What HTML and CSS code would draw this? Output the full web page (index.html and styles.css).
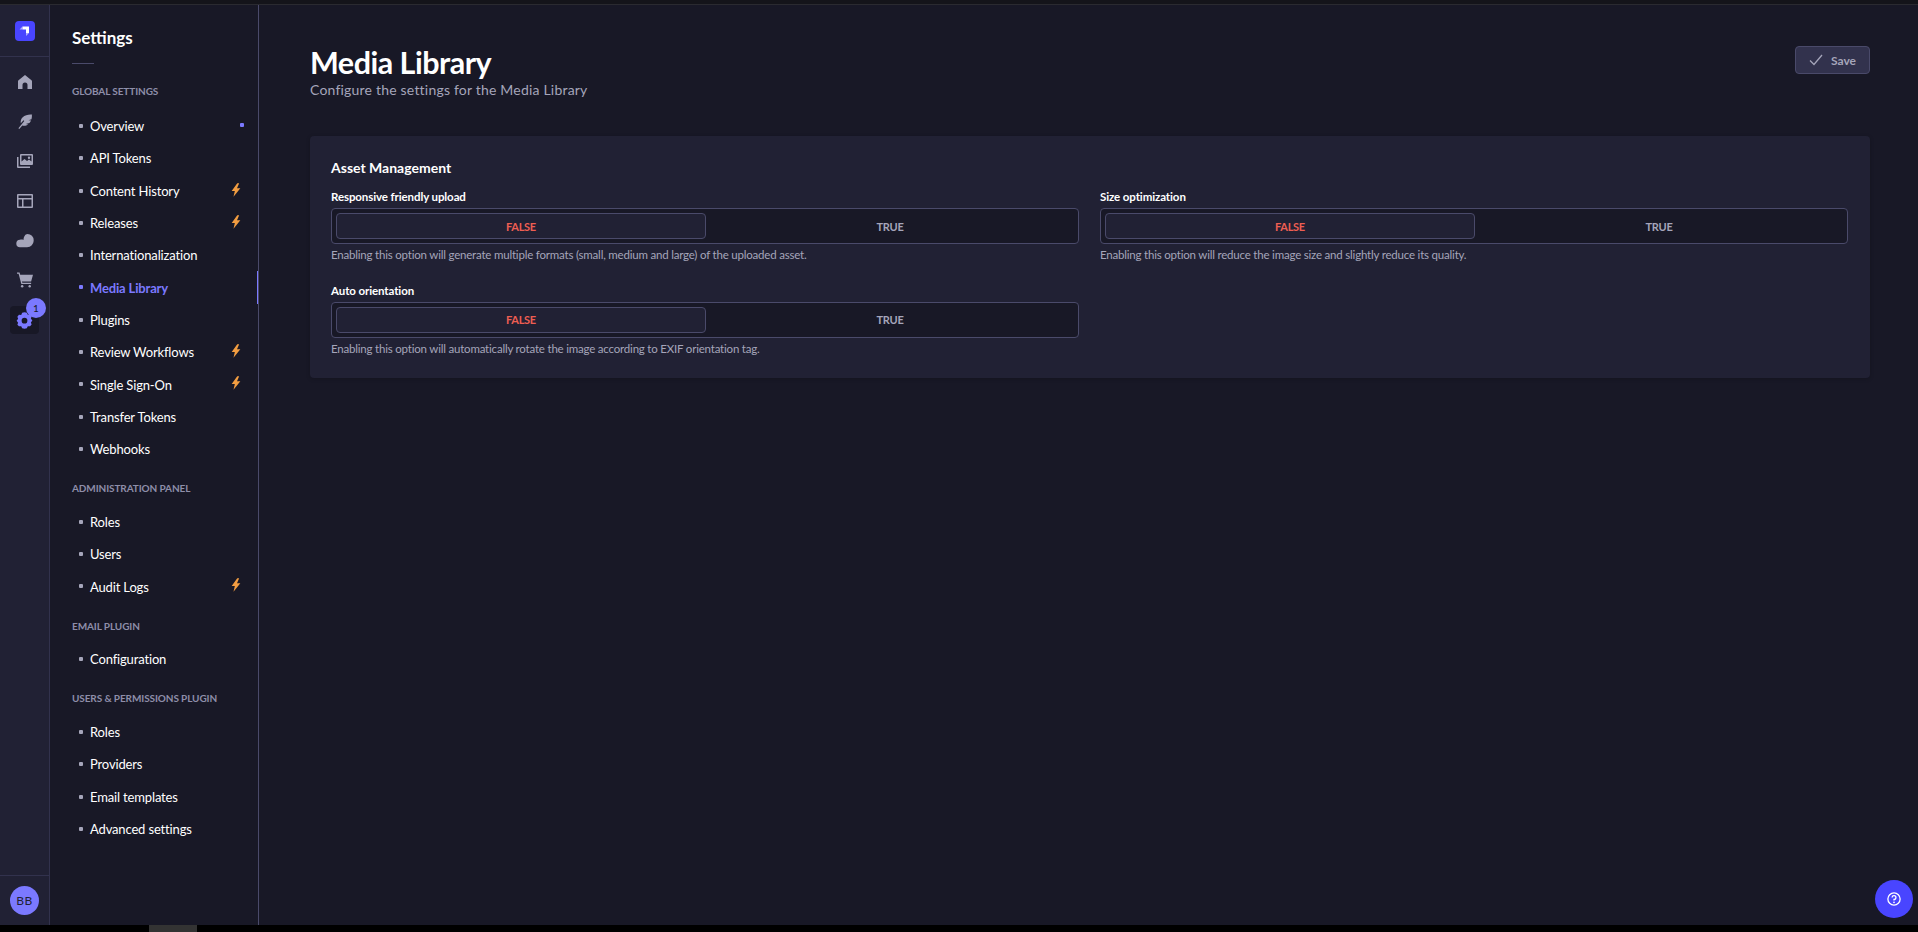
FILE: index.html
```html
<!DOCTYPE html>
<html lang="en">
<head>
<meta charset="utf-8">
<title>Media Library</title>
<link rel="stylesheet" href="styles.css">
</head>
<body>
<svg class="defs" width="0" height="0" aria-hidden="true">
  <symbol id="bolt" viewBox="0 0 12 16"><path d="M7.500 0 .8 9.200h3.800L3 16l8.200-10H7.200L9.800 0z"/></symbol>
</svg>
<div class="topstrip"></div>
<div class="app">
  <nav class="rail">
    <div class="rail-head">
      <div class="logo"><svg viewBox="0 0 20 20" width="20" height="20"><path fill="#fff" d="M14 5.500H7.500v3H11v3.500h3z"/><path fill="#fff" opacity=".55" d="M7.500 5.500v3H4.500zM11 12h3l-3 3z"/></svg></div>
    </div>
    <div class="rail-items">
      <a class="rail-item"><svg viewBox="0 0 16 16"><path d="M8 1 1.500 6.200a1.500 1.500 0 0 0-.5 1.100V15h4.500v-4a2.500 2.500 0 0 1 5 0v4H15V7.300a1.500 1.500 0 0 0-.5-1.100z"/></svg></a>
      <a class="rail-item"><svg viewBox="0 0 16 16"><path d="M15.500.700C12 .3 8 1 5.700 3.200 4 4.900 3.400 7 3.800 9.200L6.500 6.300l.8.8-5.900 7.100.9.8 3-3.400c2 .5 4.200.1 5.900-1.200l-2.500-.4 3.700-1c.7-.7 1.300-1.600 1.700-2.500l-2.600-.3 3-1c.4-1.600.5-3.200.4-4.500z"/></svg></a>
      <a class="rail-item"><svg viewBox="0 0 16 16"><path fill-rule="evenodd" d="M4 1h11a1 1 0 0 1 1 1v9a1 1 0 0 1-1 1H4a1 1 0 0 1-1-1V2a1 1 0 0 1 1-1zm.500 1.500v6l3-2.500 2.500 2 2-1.500 2.500 2v-6zM12 3.500a1.200 1.200 0 1 1 0 2.400 1.200 1.200 0 0 1 0-2.400z"/><path d="M0 4h1.500v9.500H13V15H1a1 1 0 0 1-1-1z"/></svg></a>
      <a class="rail-item"><svg viewBox="0 0 16 16"><path fill-rule="evenodd" d="M1 1h14a1 1 0 0 1 1 1v12a1 1 0 0 1-1 1H1a1 1 0 0 1-1-1V2a1 1 0 0 1 1-1zm.500 1.500V5h13V2.500zm0 4v7h3.500v-7zm5 0v7h8v-7z"/></svg></a>
      <a class="rail-item rail-item-wide"><svg viewBox="0 0 18 16"><path d="M11.500 1a6.200 6.200 0 0 1 6.200 6.300c0 3.700-2.800 7-6.700 7H4.200A3.800 3.800 0 0 1 .3 10.500 3.800 3.800 0 0 1 4 6.700c1.200-.3 2.600-.2 3.500.3.100-3 1.600-6 4-6z"/></svg></a>
      <a class="rail-item"><svg viewBox="0 0 17 16"><path d="M0 0h2.700l.7 2.500H17l-2 7H5.200l.5 1.500H15v1.300H4.600L1.700 1.300H0z"/><circle cx="5.500" cy="14.700" r="1.300"/><circle cx="13.500" cy="14.700" r="1.300"/></svg></a>
      <a class="rail-item is-active"><svg viewBox="0 0 16 16"><path fill-rule="evenodd" d="M5.800.7 8 .2l2.200.5.9 2 2.100-.2 1.500 1.700-.7 2 1.400 1.800-1.400 1.800.7 2-1.500 1.700-2.100-.2-.9 2-2.200.5-2.200-.5-.9-2-2.100.2L1.300 12l.7-2L.6 8.200 2 6.400l-.7-2 1.500-1.700 2.100.2zM8 5.500a2.700 2.700 0 1 0 0 5.400 2.700 2.700 0 0 0 0-5.400z"/></svg><span class="badge">1</span></a>
    </div>
    <div class="rail-foot"><span class="avatar">BB</span></div>
  </nav>

  <aside class="subnav">
    <h2 class="subnav-title">Settings</h2>
    <div class="subnav-rule"></div>

    <h3 class="section section-first">GLOBAL SETTINGS</h3>
    <ul class="menu">
      <li class="item"><span class="bullet"></span>Overview<span class="dot"></span></li>
      <li class="item"><span class="bullet"></span>API Tokens</li>
      <li class="item"><span class="bullet"></span>Content History<svg class="bolt"><use href="#bolt"/></svg></li>
      <li class="item"><span class="bullet"></span>Releases<svg class="bolt"><use href="#bolt"/></svg></li>
      <li class="item"><span class="bullet"></span>Internationalization</li>
      <li class="item is-current"><span class="bullet"></span>Media Library</li>
      <li class="item"><span class="bullet"></span>Plugins</li>
      <li class="item"><span class="bullet"></span>Review Workflows<svg class="bolt"><use href="#bolt"/></svg></li>
      <li class="item"><span class="bullet"></span>Single Sign-On<svg class="bolt"><use href="#bolt"/></svg></li>
      <li class="item"><span class="bullet"></span>Transfer Tokens</li>
      <li class="item"><span class="bullet"></span>Webhooks</li>
    </ul>

    <h3 class="section">ADMINISTRATION PANEL</h3>
    <ul class="menu">
      <li class="item"><span class="bullet"></span>Roles</li>
      <li class="item"><span class="bullet"></span>Users</li>
      <li class="item"><span class="bullet"></span>Audit Logs<svg class="bolt"><use href="#bolt"/></svg></li>
    </ul>

    <h3 class="section">EMAIL PLUGIN</h3>
    <ul class="menu">
      <li class="item"><span class="bullet"></span>Configuration</li>
    </ul>

    <h3 class="section">USERS &amp; PERMISSIONS PLUGIN</h3>
    <ul class="menu">
      <li class="item"><span class="bullet"></span>Roles</li>
      <li class="item"><span class="bullet"></span>Providers</li>
      <li class="item"><span class="bullet"></span>Email templates</li>
      <li class="item"><span class="bullet"></span>Advanced settings</li>
    </ul>
  </aside>

  <main class="main">
    <header class="page-head">
      <div>
        <h1 class="page-title">Media Library</h1>
        <p class="page-sub">Configure the settings for the Media Library</p>
      </div>
      <button class="save" type="button"><svg viewBox="0 0 14 12" width="14" height="12"><path d="M1 6.500 5 10.500 13 1" fill="none" stroke="currentColor" stroke-width="1.300"/></svg>Save</button>
    </header>

    <section class="card">
      <h2 class="card-title">Asset Management</h2>
      <div class="fields">
        <div class="field">
          <div class="label">Responsive friendly upload</div>
          <div class="toggle"><span class="opt opt-on">FALSE</span><span class="opt">TRUE</span></div>
          <div class="help">Enabling this option will generate multiple formats (small, medium and large) of the uploaded asset.</div>
        </div>
        <div class="field">
          <div class="label">Size optimization</div>
          <div class="toggle"><span class="opt opt-on">FALSE</span><span class="opt">TRUE</span></div>
          <div class="help">Enabling this option will reduce the image size and slightly reduce its quality.</div>
        </div>
        <div class="field">
          <div class="label">Auto orientation</div>
          <div class="toggle"><span class="opt opt-on">FALSE</span><span class="opt">TRUE</span></div>
          <div class="help">Enabling this option will automatically rotate the image according to EXIF orientation tag.</div>
        </div>
      </div>
    </section>

    <button class="help-fab" type="button" aria-label="Help"><svg viewBox="0 0 16 16" width="14" height="14"><circle cx="8" cy="8" r="7" fill="none" stroke="#fff" stroke-width="1.500"/><path d="M5.800 6.200A2.200 2.200 0 1 1 8 8.500v1.200" fill="none" stroke="#fff" stroke-width="1.500"/><circle cx="8" cy="11.800" r="1" fill="#fff"/></svg></button>
  </main>
</div>
<div class="bottomstrip"><span class="thumb"></span></div>
</body>
</html>
```

FILE: styles.css
```css
* { box-sizing: border-box; }
html, body { margin: 0; height: 932px; overflow: hidden; }
body {
  display: flex;
  flex-direction: column;
  background: #181826;
  color: #fff;
  font-family: Lato, Roboto, "Liberation Sans", sans-serif;
  font-size: 14px;
}
.defs { display: block; height: 0; }
.topstrip { height: 5px; background: #14141a; border-bottom: 1px solid #2a2a30; flex: none; }
.app { flex: 1; display: flex; min-height: 0; position: relative; }
.bottomstrip { height: 7px; background: #000; flex: none; padding-left: 149px; }
.thumb { display: block; width: 48px; height: 7px; background: #333; }

/* left rail */
.rail {
  width: 50px;
  flex: none;
  display: flex;
  flex-direction: column;
  background: #212134;
  border-right: 1px solid #32324d;
}
.rail-head { height: 52px; flex: none; display: flex; justify-content: center; padding-top: 16px; border-bottom: 1px solid #32324d; }
.logo { width: 20px; height: 20px; border-radius: 4px; background: #4945ff; }
.logo svg { display: block; }
.rail-items { flex: 1; display: flex; flex-direction: column; align-items: center; padding-top: 5.500px; }
.rail-item {
  position: relative;
  width: 29px;
  height: 39.6px;
  display: flex;
  align-items: center;
  justify-content: center;
  border-radius: 4px;
}
.rail-item svg { width: 16px; height: 16px; fill: #a5a5ba; }
.rail-item-wide svg { width: 18px; }
.rail-item.is-active { height: 28px; margin-top: 6px; background: #181826; }
.rail-item.is-active svg { width: 17px; height: 17px; fill: #7b79ff; }
.badge {
  position: absolute;
  top: -8px;
  right: -7px;
  width: 20px;
  height: 20px;
  border-radius: 50%;
  background: #7b79ff;
  color: #181826;
  font-size: 10px;
  line-height: 20px;
  text-align: center;
}
.rail-foot { height: 50px; flex: none; display: flex; justify-content: center; padding-top: 10px; border-top: 1px solid #32324d; }
.avatar {
  width: 29px;
  height: 29px;
  border-radius: 50%;
  background: #7b79ff;
  color: #212134;
  font-size: 12px;
  line-height: 29px;
  letter-spacing: .5px;
  text-align: center;
}

/* settings sub navigation */
.subnav {
  width: 209px;
  flex: none;
  position: relative;
  background: #181826;
  border-right: 1px solid #4a4a6a;
  padding: 0 0 0 22px;
}
.subnav-title { margin: 0; padding-top: 22px; font-size: 17px; line-height: 22px; font-weight: 700; }
.subnav-rule { width: 22px; height: 1px; margin-top: 14px; background: #4a4a6a; }
.section { margin: 12px 0 0; height: 21px; padding-top: 1px; font-size: 10px; line-height: 20px; letter-spacing: -.1px; font-weight: 700; color: #8e8ea9; white-space: nowrap; }
.section-first { margin-top: 16px; }
.section-first + .menu { margin-top: 9px; }
.menu { list-style: none; margin: 7.500px 0 0; padding: 0; }
.item {
  position: relative;
  height: 32.3px;
  display: flex;
  align-items: center;
  padding-left: 18px;
  font-size: 13px;
  letter-spacing: -.15px;
  color: #fff;
  white-space: nowrap;
}
.bullet { position: absolute; left: 7px; top: 14px; width: 4px; height: 4px; border-radius: 1px; background: #a5a5ba; }
.is-current { color: #7b79ff; font-weight: 700; }
.is-current .bullet { background: #7b79ff; }
.is-current::after {
  content: "";
  position: absolute;
  right: 0;
  top: 0;
  width: 1px;
  height: 33px;
  background: #7b79ff;
}
.dot { position: absolute; left: 168px; top: 13px; width: 4px; height: 4px; border-radius: 1px; background: #7b79ff; }
.bolt { position: absolute; left: 159px; top: 8px; width: 10px; height: 14px; fill: #f29d41; }

/* main */
.main { flex: 1; min-width: 0; padding: 0 48px 0 51px; position: relative; }
.page-head { display: flex; justify-content: space-between; align-items: flex-start; padding-top: 40px; }
.page-title { margin: 0; font-size: 30.500px; line-height: 34px; letter-spacing: -.5px; font-weight: 700; }
.page-sub { margin: 1px 0 0; font-size: 14px; line-height: 20px; letter-spacing: .2px; color: #a5a5ba; }
.save {
  width: 75px;
  height: 28px;
  display: flex;
  align-items: center;
  justify-content: center;
  gap: 8px;
  margin-top: 1px;
  padding: 0;
  border: 1px solid #4a4a6a;
  border-radius: 4px;
  background: #32324d;
  color: #a5a5ba;
  font: 700 12px Lato, sans-serif;
}
.card {
  margin-top: 36px;
  height: 242px;
  padding: 22px 22px 0 21px;
  border-radius: 4px;
  background: #212134;
  box-shadow: 0 1px 4px rgba(0, 0, 0, .2);
}
.card-title { margin: 0; font-size: 14px; line-height: 20px; font-weight: 700; }
.fields { display: grid; grid-template-columns: 1fr 1fr; column-gap: 21px; row-gap: 19.500px; margin-top: 11px; }
.label { font-size: 11.500px; line-height: 16px; letter-spacing: -.1px; font-weight: 700; }
.toggle {
  display: flex;
  height: 36px;
  margin-top: 3px;
  padding: 4px;
  border: 1px solid #4a4a6a;
  border-radius: 4px;
  background: #181826;
}
.opt {
  flex: 1;
  display: flex;
  align-items: center;
  justify-content: center;
  font-size: 11px;
  letter-spacing: -.3px;
  font-weight: 700;
  color: #a5a5ba;
}
.opt-on { border: 1px solid #4a4a6a; border-radius: 4px; background: #212134; color: #ee5e52; }
.help { margin-top: 3px; font-size: 11.500px; line-height: 16px; letter-spacing: -.2px; color: #a5a5ba; white-space: nowrap; }
.help-fab {
  position: absolute;
  right: 5px;
  bottom: 7px;
  width: 38px;
  height: 38px;
  display: flex;
  align-items: center;
  justify-content: center;
  padding: 0;
  border: 0;
  border-radius: 50%;
  background: #4945ff;
}
```
